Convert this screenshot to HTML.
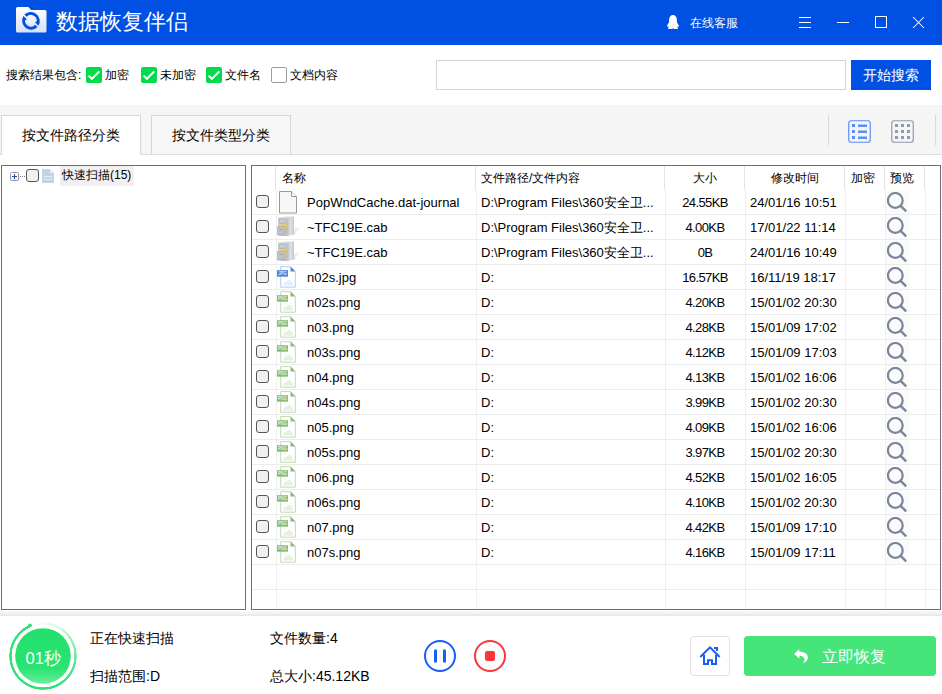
<!DOCTYPE html>
<html><head><meta charset="utf-8"><style>
*{box-sizing:border-box}
html,body{margin:0;padding:0;width:942px;height:694px;overflow:hidden;background:#fff;font-family:"Liberation Sans",sans-serif;color:#000}
.a{position:absolute}
#title{position:absolute;left:0;top:0;width:942px;height:45px;background:#0050e4}
#title .t{position:absolute;left:56px;top:6.8px;font-size:21.7px;color:#fff;line-height:30px;letter-spacing:0px}
.srch{position:absolute;top:45px;left:0;width:942px;height:60px;background:#fff}
.lbl{position:absolute;font-size:12px;line-height:16px;top:67px;color:#000}
.gcb{position:absolute;top:67px;width:16px;height:16px;border-radius:2px;background:#00dc4a}
.gcb svg{position:absolute;left:0;top:0}
.ucb{position:absolute;top:67px;width:16px;height:16px;border-radius:2px;border:1px solid #9c9c9c;background:#fff}
#band{position:absolute;left:0;top:105px;width:942px;height:50px;background:#f5f5f5;border-bottom:1px solid #dcdcdc}
.tab{position:absolute;top:115px;height:40px;border:1px solid #d6d6d6;border-bottom:none;font-size:14px;line-height:38px;text-align:center;color:#000}
#lp{position:absolute;left:1px;top:165px;width:245px;height:445px;border:1px solid #6f6f6f;background:#fff}
#rp{position:absolute;left:251px;top:165px;width:690px;height:445px;border:1px solid #6f6f6f;background:#fff;overflow:hidden}
.hd{position:absolute;top:0;height:24px;font-size:12px;line-height:24px;color:#000}
.vl{position:absolute;width:1px;background:#efefef}
.hv{background:#e3e3e3}
.hl{position:absolute;height:1px;left:0;width:688px;background:#ececec}
.row{position:absolute;left:0;width:688px;height:25px;font-size:13px;line-height:25px;color:#000}
.row .cb{position:absolute;left:4px;top:6px;width:13px;height:13px;border:1.5px solid #555;border-radius:3px;background:#f0f0f0}
.row .icw{position:absolute;left:25px;top:1px}
.row .ic{display:block}
.row .nm{position:absolute;left:55px;top:1px}
.row .pt{position:absolute;left:229px;top:1px}
.row .sz{position:absolute;left:413px;width:80px;text-align:center;top:1px;letter-spacing:-0.6px}
.row .dt{position:absolute;left:498px;top:1px}
.row .mbg{position:absolute;left:634px;top:1px;width:23px;height:24px;background:#fbfbfb}
.row .mag{position:absolute;left:635px;top:3px}
#bot{position:absolute;left:0;top:611px;width:942px;height:83px;background:#fff}
#shadow{position:absolute;left:0;top:611px;width:942px;height:5px;background:linear-gradient(#fbfbfb,#f2f2f2 50%,#e6e6e6)}
.bt{position:absolute;font-size:14px;line-height:16px;color:#000}
</style></head><body>
<div id="title">
  <svg class="a" style="left:16px;top:7px" width="31" height="26" viewBox="0 0 31 26">
    <defs><linearGradient id="fg" x1="0" y1="0" x2="0" y2="1"><stop offset="0" stop-color="#ffffff"/><stop offset="1" stop-color="#d6e2fb"/></linearGradient></defs>
    <path d="M1.5 0h11l2.5 3h14a1.5 1.5 0 0 1 1.5 1.5v19.5a1.5 1.5 0 0 1-1.5 1.5h-27.5a1.5 1.5 0 0 1-1.5-1.5v-22.5a1.5 1.5 0 0 1 1.5-1.5z" fill="url(#fg)"/>
    <g fill="#0050e4"><path d="M8.42 7.61A9 9 0 0 1 22.45 18.7L19 15.25L20.78 14.31A5.85 5.85 0 0 0 10.65 9.84Z"/><path d="M21.48 19.99A9 9 0 0 1 7.45 8.9L10.9 12.35L9.12 13.29A5.85 5.85 0 0 0 19.25 17.76Z"/></g>
  </svg>
  <div class="t">数据恢复伴侣</div>
  <svg class="a" style="left:667px;top:15px" width="12" height="14" viewBox="0 0 12 14"><path d="M6 0C8.3 0 9.6 1.7 9.8 4L10 7.5C10.8 8.5 11.6 9.8 12 11.5C11.6 11.9 11 11.6 10.5 11.2L10.5 12.5C11 12.8 11.2 13.3 10.8 13.7C10 14.1 8 14.1 6.8 13.8L6 13.4L5.2 13.8C4 14.1 2 14.1 1.2 13.7C0.8 13.3 1 12.8 1.5 12.5L1.5 11.2C1 11.6 0.4 11.9 0 11.5C0.4 9.8 1.2 8.5 2 7.5L2.2 4C2.4 1.7 3.7 0 6 0Z" fill="#fff"/></svg>
  <div class="a" style="left:690px;top:15px;font-size:12px;line-height:16px;color:#fff">在线客服</div>
  <div class="a" style="left:799px;top:17px;width:12px;height:1px;background:#fff"></div>
  <div class="a" style="left:799px;top:22px;width:12px;height:1px;background:#fff"></div>
  <div class="a" style="left:799px;top:27px;width:12px;height:1px;background:#fff"></div>
  <div class="a" style="left:837px;top:22px;width:12px;height:1px;background:#fff"></div>
  <div class="a" style="left:875px;top:16px;width:12px;height:12px;border:1px solid #fff"></div>
  <svg class="a" style="left:912px;top:16px" width="14" height="14" viewBox="0 0 14 14"><path d="M1 1L12 12M12 1L1 12" stroke="#fff" stroke-width="1.05"/></svg>
</div>

<div class="lbl" style="left:6px">搜索结果包含:</div>
<div class="gcb" style="left:86px"><svg width="16" height="16" viewBox="0 0 16 16"><path d="M2.6 8.6L5.9 11.8L13.3 4.4" fill="none" stroke="#fff" stroke-width="2"/></svg></div>
<div class="lbl" style="left:105px">加密</div>
<div class="gcb" style="left:141px"><svg width="16" height="16" viewBox="0 0 16 16"><path d="M2.6 8.6L5.9 11.8L13.3 4.4" fill="none" stroke="#fff" stroke-width="2"/></svg></div>
<div class="lbl" style="left:160px">未加密</div>
<div class="gcb" style="left:206px"><svg width="16" height="16" viewBox="0 0 16 16"><path d="M2.6 8.6L5.9 11.8L13.3 4.4" fill="none" stroke="#fff" stroke-width="2"/></svg></div>
<div class="lbl" style="left:225px">文件名</div>
<div class="ucb" style="left:271px"></div>
<div class="lbl" style="left:290px">文档内容</div>
<div class="a" style="left:436px;top:60px;width:410px;height:30px;border:1px solid #d4d4d4;background:#fff"></div>
<div class="a" style="left:851px;top:60px;width:80px;height:30px;background:#0050e4;color:#fff;font-size:14px;line-height:30px;text-align:center">开始搜索</div>

<div id="band"></div>
<div class="tab" style="left:1px;width:140px;background:#fff;height:40px">按文件路径分类</div>
<div class="tab" style="left:151px;width:140px;background:#f7f7f7;height:39px">按文件类型分类</div>
<div class="a" style="left:828px;top:115px;width:1px;height:30px;background:#d8d8d8"></div>
<div class="a" style="left:935px;top:115px;width:1px;height:30px;background:#d8d8d8"></div>
<svg class="a" style="left:848px;top:120px" width="23" height="23" viewBox="0 0 23 23"><rect x="0.75" y="0.75" width="21.5" height="21.5" rx="2.5" fill="none" stroke="#5b8ff9" stroke-width="1.2"/><g fill="#5b8ff9"><rect x="4" y="4" width="3" height="3"/><rect x="4" y="10" width="3" height="3"/><rect x="4" y="16" width="3" height="3"/><rect x="10" y="4.5" width="9" height="2.5"/><rect x="10" y="10.5" width="9" height="2.5"/><rect x="10" y="16.5" width="9" height="2.5"/></g></svg>
<svg class="a" style="left:891px;top:120px" width="23" height="23" viewBox="0 0 23 23"><rect x="0.75" y="0.75" width="21.5" height="21.5" rx="2.5" fill="none" stroke="#8e9ab4" stroke-width="1.2"/><g fill="#8e9ab4"><rect x="4" y="4" width="3" height="3"/><rect x="10" y="4" width="3" height="3"/><rect x="16" y="4" width="3" height="3"/><rect x="4" y="10" width="3" height="3"/><rect x="10" y="10" width="3" height="3"/><rect x="16" y="10" width="3" height="3"/><rect x="4" y="16" width="3" height="3"/><rect x="10" y="16" width="3" height="3"/><rect x="16" y="16" width="3" height="3"/></g></svg>

<div id="lp">
  <div class="a" style="left:8px;top:6px;width:9px;height:9px;border:1px solid #9a9a9a;border-radius:1.5px;background:linear-gradient(#fff,#ececec)"></div>
  <div class="a" style="left:10px;top:10px;width:5px;height:1px;background:#2a4aa0"></div>
  <div class="a" style="left:12px;top:8px;width:1px;height:5px;background:#2a4aa0"></div>
  <div class="a" style="left:18px;top:10px;width:1px;height:1px;background:#777"></div><div class="a" style="left:20px;top:10px;width:1px;height:1px;background:#777"></div><div class="a" style="left:22px;top:10px;width:1px;height:1px;background:#777"></div>
  <div class="a" style="left:24px;top:3px;width:13px;height:13px;border:1.5px solid #555;border-radius:3px;background:#f0f0f0"></div>
  <svg class="a" style="left:40px;top:3px" width="12" height="14" viewBox="0 0 12 14"><path d="M0 0h8l4 4v10H0z" fill="#c5d2e3"/><path d="M8 0v4h4z" fill="#e8eef6"/><rect x="2" y="7" width="8" height="1" fill="#e9eef5"/><rect x="2" y="10" width="8" height="1" fill="#e9eef5"/></svg>
  <div class="a" style="left:58px;top:0px;width:74px;height:20px;background:#f0f0f0;font-size:12px;line-height:19.5px;padding-left:2px;color:#000">快速扫描(15)</div>
</div>

<div id="rp">
  <div class="hd" style="left:29.5px">名称</div>
  <div class="hd" style="left:229px">文件路径/文件内容</div>
  <div class="hd" style="left:441px">大小</div>
  <div class="hd" style="left:519px">修改时间</div>
  <div class="hd" style="left:599px">加密</div>
  <div class="hd" style="left:637.5px">预览</div>
  <div class="vl hv" style="left:23px;top:0;height:24px"></div>
  <div class="vl hv" style="left:223px;top:0;height:24px"></div>
  <div class="vl hv" style="left:412px;top:0;height:24px"></div>
  <div class="vl hv" style="left:492px;top:0;height:24px"></div>
  <div class="vl hv" style="left:592px;top:0;height:24px"></div>
  <div class="vl hv" style="left:632px;top:0;height:24px"></div>
  <div class="vl hv" style="left:672px;top:0;height:24px"></div>
  <div class="vl" style="left:24px;top:24px;height:420px"></div>
  <div class="vl" style="left:224px;top:24px;height:420px"></div>
  <div class="vl" style="left:413px;top:24px;height:420px"></div>
  <div class="vl" style="left:493px;top:24px;height:420px"></div>
  <div class="vl" style="left:593px;top:24px;height:420px"></div>
  <div class="vl" style="left:633px;top:24px;height:420px"></div>
  <div class="vl" style="left:673px;top:24px;height:420px"></div>
  <div class="hl" style="top:48px"></div>
<div class="hl" style="top:73px"></div>
<div class="hl" style="top:98px"></div>
<div class="hl" style="top:123px"></div>
<div class="hl" style="top:148px"></div>
<div class="hl" style="top:173px"></div>
<div class="hl" style="top:198px"></div>
<div class="hl" style="top:223px"></div>
<div class="hl" style="top:248px"></div>
<div class="hl" style="top:273px"></div>
<div class="hl" style="top:298px"></div>
<div class="hl" style="top:323px"></div>
<div class="hl" style="top:348px"></div>
<div class="hl" style="top:373px"></div>
<div class="hl" style="top:398px"></div>
<div class="hl" style="top:423px"></div>
  <div class="row" style="top:23px"><div class="cb"></div><div class="icw"><svg class="ic" width="22" height="24" viewBox="0 0 22 24"><path d="M2.5 1.5h12l5 5v16.5h-17z" fill="#f7f7f7" stroke="#9a9a9a"/><path d="M14.5 1.5v5h5" fill="#fff" stroke="#9a9a9a"/></svg></div><div class="nm">PopWndCache.dat-journal</div><div class="pt">D:\Program Files\360安全卫...</div><div class="sz">24.55KB</div><div class="dt">24/01/16 10:51</div><div class="mbg"></div><svg class="mag" width="22" height="22" viewBox="0 0 22 22"><circle cx="8.3" cy="8.4" r="7.4" fill="none" stroke="#7a859b" stroke-width="2.2"/><path d="M13.6 13.8l5.6 5.6" stroke="#7a859b" stroke-width="2.4" stroke-linecap="butt"/></svg></div>
<div class="row" style="top:48px"><div class="cb"></div><div class="icw"><svg class="ic" width="22" height="24" viewBox="0 0 22 24"><defs><linearGradient id="cs" x1="0" x2="1"><stop offset="0" stop-color="#aeb6bb"/><stop offset="0.5" stop-color="#dde1e4"/><stop offset="1" stop-color="#c3c9cd"/></linearGradient><linearGradient id="cf" x1="0" y1="0" x2="0" y2="1"><stop offset="0" stop-color="#c9cfd4"/><stop offset="1" stop-color="#b9c0c6"/></linearGradient></defs><path d="M17 14l4.8-1.5v1L17 21z" fill="#ececec"/><path d="M9.7 2.3L17 1.6V19.6L9.7 21.2z" fill="url(#cs)"/><path d="M1.3 2.6L9.7 2.3V21.2L1.3 20.4z" fill="url(#cf)"/><path d="M1.3 2.6L9.7 2.3L17 1.6L9 1.3z" fill="#e4e8ea"/><path d="M2.2 4h6.6v4.5H2.2z" fill="none" stroke="#a9b0b6" stroke-width="0.7"/><path d="M1.5 9.2h7.8l-0.3 7H1.5z" fill="#efcf5a"/><path d="M8.6 9.3h0.9v8h-0.9z" fill="#e2b93c"/><path d="M0.3 11.6h7.7v8.1H0.3z" fill="#bcc3c9" stroke="#9ea6ac" stroke-width="0.6"/><path d="M2.3 14.5h3.5" stroke="#8e969c" stroke-width="0.7"/></svg></div><div class="nm">~TFC19E.cab</div><div class="pt">D:\Program Files\360安全卫...</div><div class="sz">4.00KB</div><div class="dt">17/01/22 11:14</div><div class="mbg"></div><svg class="mag" width="22" height="22" viewBox="0 0 22 22"><circle cx="8.3" cy="8.4" r="7.4" fill="none" stroke="#7a859b" stroke-width="2.2"/><path d="M13.6 13.8l5.6 5.6" stroke="#7a859b" stroke-width="2.4" stroke-linecap="butt"/></svg></div>
<div class="row" style="top:73px"><div class="cb"></div><div class="icw"><svg class="ic" width="22" height="24" viewBox="0 0 22 24"><defs><linearGradient id="cs" x1="0" x2="1"><stop offset="0" stop-color="#aeb6bb"/><stop offset="0.5" stop-color="#dde1e4"/><stop offset="1" stop-color="#c3c9cd"/></linearGradient><linearGradient id="cf" x1="0" y1="0" x2="0" y2="1"><stop offset="0" stop-color="#c9cfd4"/><stop offset="1" stop-color="#b9c0c6"/></linearGradient></defs><path d="M17 14l4.8-1.5v1L17 21z" fill="#ececec"/><path d="M9.7 2.3L17 1.6V19.6L9.7 21.2z" fill="url(#cs)"/><path d="M1.3 2.6L9.7 2.3V21.2L1.3 20.4z" fill="url(#cf)"/><path d="M1.3 2.6L9.7 2.3L17 1.6L9 1.3z" fill="#e4e8ea"/><path d="M2.2 4h6.6v4.5H2.2z" fill="none" stroke="#a9b0b6" stroke-width="0.7"/><path d="M1.5 9.2h7.8l-0.3 7H1.5z" fill="#efcf5a"/><path d="M8.6 9.3h0.9v8h-0.9z" fill="#e2b93c"/><path d="M0.3 11.6h7.7v8.1H0.3z" fill="#bcc3c9" stroke="#9ea6ac" stroke-width="0.6"/><path d="M2.3 14.5h3.5" stroke="#8e969c" stroke-width="0.7"/></svg></div><div class="nm">~TFC19E.cab</div><div class="pt">D:\Program Files\360安全卫...</div><div class="sz">0B</div><div class="dt">24/01/16 10:49</div><div class="mbg"></div><svg class="mag" width="22" height="22" viewBox="0 0 22 22"><circle cx="8.3" cy="8.4" r="7.4" fill="none" stroke="#7a859b" stroke-width="2.2"/><path d="M13.6 13.8l5.6 5.6" stroke="#7a859b" stroke-width="2.4" stroke-linecap="butt"/></svg></div>
<div class="row" style="top:98px"><div class="cb"></div><div class="icw"><svg class="ic" width="22" height="24" viewBox="0 0 22 24"><path d="M3.7 1.6H13.5L18.3 6.4V22.2H3.7Z" fill="#fff" stroke="#b3cbf2"/><path d="M13.5 1.6L18.3 6.4H13.5Z" fill="#4f86e0"/><rect x="0" y="5.2" width="11" height="6.5" fill="#4f86e0"/><text x="1.2" y="10.2" font-size="4.6" fill="#fff" font-family="Liberation Sans" textLength="8.5" lengthAdjust="spacingAndGlyphs">JPG</text><path d="M5.8 20.6C6.5 18 8 16.5 9.5 16.5C10.5 14.3 13.5 14.3 14.5 16.8C15.5 17.5 16.2 19 16.2 20.6Z" fill="#e3edfb"/><circle cx="8.4" cy="13.6" r="0.8" fill="#e3edfb"/></svg></div><div class="nm">n02s.jpg</div><div class="pt">D:</div><div class="sz">16.57KB</div><div class="dt">16/11/19 18:17</div><div class="mbg"></div><svg class="mag" width="22" height="22" viewBox="0 0 22 22"><circle cx="8.3" cy="8.4" r="7.4" fill="none" stroke="#7a859b" stroke-width="2.2"/><path d="M13.6 13.8l5.6 5.6" stroke="#7a859b" stroke-width="2.4" stroke-linecap="butt"/></svg></div>
<div class="row" style="top:123px"><div class="cb"></div><div class="icw"><svg class="ic" width="22" height="24" viewBox="0 0 22 24"><path d="M3.7 1.6H13.5L18.3 6.4V22.2H3.7Z" fill="#fff" stroke="#c0dab3"/><path d="M13.5 1.6L18.3 6.4H13.5Z" fill="#89bb74"/><rect x="0" y="5.2" width="11" height="6.5" fill="#89bb74"/><text x="1" y="10.2" font-size="4.6" fill="#fff" font-family="Liberation Sans" textLength="9" lengthAdjust="spacingAndGlyphs">PNG</text><path d="M5.8 20.6C6.5 18 8 16.5 9.5 16.5C10.5 14.3 13.5 14.3 14.5 16.8C15.5 17.5 16.2 19 16.2 20.6Z" fill="#e6f1e1"/><circle cx="8.4" cy="13.6" r="0.8" fill="#e6f1e1"/></svg></div><div class="nm">n02s.png</div><div class="pt">D:</div><div class="sz">4.20KB</div><div class="dt">15/01/02 20:30</div><div class="mbg"></div><svg class="mag" width="22" height="22" viewBox="0 0 22 22"><circle cx="8.3" cy="8.4" r="7.4" fill="none" stroke="#7a859b" stroke-width="2.2"/><path d="M13.6 13.8l5.6 5.6" stroke="#7a859b" stroke-width="2.4" stroke-linecap="butt"/></svg></div>
<div class="row" style="top:148px"><div class="cb"></div><div class="icw"><svg class="ic" width="22" height="24" viewBox="0 0 22 24"><path d="M3.7 1.6H13.5L18.3 6.4V22.2H3.7Z" fill="#fff" stroke="#c0dab3"/><path d="M13.5 1.6L18.3 6.4H13.5Z" fill="#89bb74"/><rect x="0" y="5.2" width="11" height="6.5" fill="#89bb74"/><text x="1" y="10.2" font-size="4.6" fill="#fff" font-family="Liberation Sans" textLength="9" lengthAdjust="spacingAndGlyphs">PNG</text><path d="M5.8 20.6C6.5 18 8 16.5 9.5 16.5C10.5 14.3 13.5 14.3 14.5 16.8C15.5 17.5 16.2 19 16.2 20.6Z" fill="#e6f1e1"/><circle cx="8.4" cy="13.6" r="0.8" fill="#e6f1e1"/></svg></div><div class="nm">n03.png</div><div class="pt">D:</div><div class="sz">4.28KB</div><div class="dt">15/01/09 17:02</div><div class="mbg"></div><svg class="mag" width="22" height="22" viewBox="0 0 22 22"><circle cx="8.3" cy="8.4" r="7.4" fill="none" stroke="#7a859b" stroke-width="2.2"/><path d="M13.6 13.8l5.6 5.6" stroke="#7a859b" stroke-width="2.4" stroke-linecap="butt"/></svg></div>
<div class="row" style="top:173px"><div class="cb"></div><div class="icw"><svg class="ic" width="22" height="24" viewBox="0 0 22 24"><path d="M3.7 1.6H13.5L18.3 6.4V22.2H3.7Z" fill="#fff" stroke="#c0dab3"/><path d="M13.5 1.6L18.3 6.4H13.5Z" fill="#89bb74"/><rect x="0" y="5.2" width="11" height="6.5" fill="#89bb74"/><text x="1" y="10.2" font-size="4.6" fill="#fff" font-family="Liberation Sans" textLength="9" lengthAdjust="spacingAndGlyphs">PNG</text><path d="M5.8 20.6C6.5 18 8 16.5 9.5 16.5C10.5 14.3 13.5 14.3 14.5 16.8C15.5 17.5 16.2 19 16.2 20.6Z" fill="#e6f1e1"/><circle cx="8.4" cy="13.6" r="0.8" fill="#e6f1e1"/></svg></div><div class="nm">n03s.png</div><div class="pt">D:</div><div class="sz">4.12KB</div><div class="dt">15/01/09 17:03</div><div class="mbg"></div><svg class="mag" width="22" height="22" viewBox="0 0 22 22"><circle cx="8.3" cy="8.4" r="7.4" fill="none" stroke="#7a859b" stroke-width="2.2"/><path d="M13.6 13.8l5.6 5.6" stroke="#7a859b" stroke-width="2.4" stroke-linecap="butt"/></svg></div>
<div class="row" style="top:198px"><div class="cb"></div><div class="icw"><svg class="ic" width="22" height="24" viewBox="0 0 22 24"><path d="M3.7 1.6H13.5L18.3 6.4V22.2H3.7Z" fill="#fff" stroke="#c0dab3"/><path d="M13.5 1.6L18.3 6.4H13.5Z" fill="#89bb74"/><rect x="0" y="5.2" width="11" height="6.5" fill="#89bb74"/><text x="1" y="10.2" font-size="4.6" fill="#fff" font-family="Liberation Sans" textLength="9" lengthAdjust="spacingAndGlyphs">PNG</text><path d="M5.8 20.6C6.5 18 8 16.5 9.5 16.5C10.5 14.3 13.5 14.3 14.5 16.8C15.5 17.5 16.2 19 16.2 20.6Z" fill="#e6f1e1"/><circle cx="8.4" cy="13.6" r="0.8" fill="#e6f1e1"/></svg></div><div class="nm">n04.png</div><div class="pt">D:</div><div class="sz">4.13KB</div><div class="dt">15/01/02 16:06</div><div class="mbg"></div><svg class="mag" width="22" height="22" viewBox="0 0 22 22"><circle cx="8.3" cy="8.4" r="7.4" fill="none" stroke="#7a859b" stroke-width="2.2"/><path d="M13.6 13.8l5.6 5.6" stroke="#7a859b" stroke-width="2.4" stroke-linecap="butt"/></svg></div>
<div class="row" style="top:223px"><div class="cb"></div><div class="icw"><svg class="ic" width="22" height="24" viewBox="0 0 22 24"><path d="M3.7 1.6H13.5L18.3 6.4V22.2H3.7Z" fill="#fff" stroke="#c0dab3"/><path d="M13.5 1.6L18.3 6.4H13.5Z" fill="#89bb74"/><rect x="0" y="5.2" width="11" height="6.5" fill="#89bb74"/><text x="1" y="10.2" font-size="4.6" fill="#fff" font-family="Liberation Sans" textLength="9" lengthAdjust="spacingAndGlyphs">PNG</text><path d="M5.8 20.6C6.5 18 8 16.5 9.5 16.5C10.5 14.3 13.5 14.3 14.5 16.8C15.5 17.5 16.2 19 16.2 20.6Z" fill="#e6f1e1"/><circle cx="8.4" cy="13.6" r="0.8" fill="#e6f1e1"/></svg></div><div class="nm">n04s.png</div><div class="pt">D:</div><div class="sz">3.99KB</div><div class="dt">15/01/02 20:30</div><div class="mbg"></div><svg class="mag" width="22" height="22" viewBox="0 0 22 22"><circle cx="8.3" cy="8.4" r="7.4" fill="none" stroke="#7a859b" stroke-width="2.2"/><path d="M13.6 13.8l5.6 5.6" stroke="#7a859b" stroke-width="2.4" stroke-linecap="butt"/></svg></div>
<div class="row" style="top:248px"><div class="cb"></div><div class="icw"><svg class="ic" width="22" height="24" viewBox="0 0 22 24"><path d="M3.7 1.6H13.5L18.3 6.4V22.2H3.7Z" fill="#fff" stroke="#c0dab3"/><path d="M13.5 1.6L18.3 6.4H13.5Z" fill="#89bb74"/><rect x="0" y="5.2" width="11" height="6.5" fill="#89bb74"/><text x="1" y="10.2" font-size="4.6" fill="#fff" font-family="Liberation Sans" textLength="9" lengthAdjust="spacingAndGlyphs">PNG</text><path d="M5.8 20.6C6.5 18 8 16.5 9.5 16.5C10.5 14.3 13.5 14.3 14.5 16.8C15.5 17.5 16.2 19 16.2 20.6Z" fill="#e6f1e1"/><circle cx="8.4" cy="13.6" r="0.8" fill="#e6f1e1"/></svg></div><div class="nm">n05.png</div><div class="pt">D:</div><div class="sz">4.09KB</div><div class="dt">15/01/02 16:06</div><div class="mbg"></div><svg class="mag" width="22" height="22" viewBox="0 0 22 22"><circle cx="8.3" cy="8.4" r="7.4" fill="none" stroke="#7a859b" stroke-width="2.2"/><path d="M13.6 13.8l5.6 5.6" stroke="#7a859b" stroke-width="2.4" stroke-linecap="butt"/></svg></div>
<div class="row" style="top:273px"><div class="cb"></div><div class="icw"><svg class="ic" width="22" height="24" viewBox="0 0 22 24"><path d="M3.7 1.6H13.5L18.3 6.4V22.2H3.7Z" fill="#fff" stroke="#c0dab3"/><path d="M13.5 1.6L18.3 6.4H13.5Z" fill="#89bb74"/><rect x="0" y="5.2" width="11" height="6.5" fill="#89bb74"/><text x="1" y="10.2" font-size="4.6" fill="#fff" font-family="Liberation Sans" textLength="9" lengthAdjust="spacingAndGlyphs">PNG</text><path d="M5.8 20.6C6.5 18 8 16.5 9.5 16.5C10.5 14.3 13.5 14.3 14.5 16.8C15.5 17.5 16.2 19 16.2 20.6Z" fill="#e6f1e1"/><circle cx="8.4" cy="13.6" r="0.8" fill="#e6f1e1"/></svg></div><div class="nm">n05s.png</div><div class="pt">D:</div><div class="sz">3.97KB</div><div class="dt">15/01/02 20:30</div><div class="mbg"></div><svg class="mag" width="22" height="22" viewBox="0 0 22 22"><circle cx="8.3" cy="8.4" r="7.4" fill="none" stroke="#7a859b" stroke-width="2.2"/><path d="M13.6 13.8l5.6 5.6" stroke="#7a859b" stroke-width="2.4" stroke-linecap="butt"/></svg></div>
<div class="row" style="top:298px"><div class="cb"></div><div class="icw"><svg class="ic" width="22" height="24" viewBox="0 0 22 24"><path d="M3.7 1.6H13.5L18.3 6.4V22.2H3.7Z" fill="#fff" stroke="#c0dab3"/><path d="M13.5 1.6L18.3 6.4H13.5Z" fill="#89bb74"/><rect x="0" y="5.2" width="11" height="6.5" fill="#89bb74"/><text x="1" y="10.2" font-size="4.6" fill="#fff" font-family="Liberation Sans" textLength="9" lengthAdjust="spacingAndGlyphs">PNG</text><path d="M5.8 20.6C6.5 18 8 16.5 9.5 16.5C10.5 14.3 13.5 14.3 14.5 16.8C15.5 17.5 16.2 19 16.2 20.6Z" fill="#e6f1e1"/><circle cx="8.4" cy="13.6" r="0.8" fill="#e6f1e1"/></svg></div><div class="nm">n06.png</div><div class="pt">D:</div><div class="sz">4.52KB</div><div class="dt">15/01/02 16:05</div><div class="mbg"></div><svg class="mag" width="22" height="22" viewBox="0 0 22 22"><circle cx="8.3" cy="8.4" r="7.4" fill="none" stroke="#7a859b" stroke-width="2.2"/><path d="M13.6 13.8l5.6 5.6" stroke="#7a859b" stroke-width="2.4" stroke-linecap="butt"/></svg></div>
<div class="row" style="top:323px"><div class="cb"></div><div class="icw"><svg class="ic" width="22" height="24" viewBox="0 0 22 24"><path d="M3.7 1.6H13.5L18.3 6.4V22.2H3.7Z" fill="#fff" stroke="#c0dab3"/><path d="M13.5 1.6L18.3 6.4H13.5Z" fill="#89bb74"/><rect x="0" y="5.2" width="11" height="6.5" fill="#89bb74"/><text x="1" y="10.2" font-size="4.6" fill="#fff" font-family="Liberation Sans" textLength="9" lengthAdjust="spacingAndGlyphs">PNG</text><path d="M5.8 20.6C6.5 18 8 16.5 9.5 16.5C10.5 14.3 13.5 14.3 14.5 16.8C15.5 17.5 16.2 19 16.2 20.6Z" fill="#e6f1e1"/><circle cx="8.4" cy="13.6" r="0.8" fill="#e6f1e1"/></svg></div><div class="nm">n06s.png</div><div class="pt">D:</div><div class="sz">4.10KB</div><div class="dt">15/01/02 20:30</div><div class="mbg"></div><svg class="mag" width="22" height="22" viewBox="0 0 22 22"><circle cx="8.3" cy="8.4" r="7.4" fill="none" stroke="#7a859b" stroke-width="2.2"/><path d="M13.6 13.8l5.6 5.6" stroke="#7a859b" stroke-width="2.4" stroke-linecap="butt"/></svg></div>
<div class="row" style="top:348px"><div class="cb"></div><div class="icw"><svg class="ic" width="22" height="24" viewBox="0 0 22 24"><path d="M3.7 1.6H13.5L18.3 6.4V22.2H3.7Z" fill="#fff" stroke="#c0dab3"/><path d="M13.5 1.6L18.3 6.4H13.5Z" fill="#89bb74"/><rect x="0" y="5.2" width="11" height="6.5" fill="#89bb74"/><text x="1" y="10.2" font-size="4.6" fill="#fff" font-family="Liberation Sans" textLength="9" lengthAdjust="spacingAndGlyphs">PNG</text><path d="M5.8 20.6C6.5 18 8 16.5 9.5 16.5C10.5 14.3 13.5 14.3 14.5 16.8C15.5 17.5 16.2 19 16.2 20.6Z" fill="#e6f1e1"/><circle cx="8.4" cy="13.6" r="0.8" fill="#e6f1e1"/></svg></div><div class="nm">n07.png</div><div class="pt">D:</div><div class="sz">4.42KB</div><div class="dt">15/01/09 17:10</div><div class="mbg"></div><svg class="mag" width="22" height="22" viewBox="0 0 22 22"><circle cx="8.3" cy="8.4" r="7.4" fill="none" stroke="#7a859b" stroke-width="2.2"/><path d="M13.6 13.8l5.6 5.6" stroke="#7a859b" stroke-width="2.4" stroke-linecap="butt"/></svg></div>
<div class="row" style="top:373px"><div class="cb"></div><div class="icw"><svg class="ic" width="22" height="24" viewBox="0 0 22 24"><path d="M3.7 1.6H13.5L18.3 6.4V22.2H3.7Z" fill="#fff" stroke="#c0dab3"/><path d="M13.5 1.6L18.3 6.4H13.5Z" fill="#89bb74"/><rect x="0" y="5.2" width="11" height="6.5" fill="#89bb74"/><text x="1" y="10.2" font-size="4.6" fill="#fff" font-family="Liberation Sans" textLength="9" lengthAdjust="spacingAndGlyphs">PNG</text><path d="M5.8 20.6C6.5 18 8 16.5 9.5 16.5C10.5 14.3 13.5 14.3 14.5 16.8C15.5 17.5 16.2 19 16.2 20.6Z" fill="#e6f1e1"/><circle cx="8.4" cy="13.6" r="0.8" fill="#e6f1e1"/></svg></div><div class="nm">n07s.png</div><div class="pt">D:</div><div class="sz">4.16KB</div><div class="dt">15/01/09 17:11</div><div class="mbg"></div><svg class="mag" width="22" height="22" viewBox="0 0 22 22"><circle cx="8.3" cy="8.4" r="7.4" fill="none" stroke="#7a859b" stroke-width="2.2"/><path d="M13.6 13.8l5.6 5.6" stroke="#7a859b" stroke-width="2.4" stroke-linecap="butt"/></svg></div>
</div>

<div id="bot"></div>
<div id="shadow"></div>
<svg class="a" style="left:7px;top:620px" width="72" height="72" viewBox="0 0 72 72">
  <defs><linearGradient id="ig" x1="0" y1="0" x2="0" y2="1"><stop offset="0" stop-color="#22e06b"/><stop offset="0.72" stop-color="#2ae371"/><stop offset="1" stop-color="#68ef9c"/></linearGradient>
  <linearGradient id="rg" x1="0" y1="0" x2="1" y2="0"><stop offset="0" stop-color="#2fe078"/><stop offset="1" stop-color="#c9f7dc"/></linearGradient></defs>
  <circle cx="36" cy="36" r="27.8" fill="url(#ig)"/>
  <circle cx="23" cy="5.3" r="1.9" fill="#2fe078"/>
</svg>
<div class="a" style="left:9px;top:622px;width:68px;height:68px;border-radius:50%;background:conic-gradient(from 336deg,rgba(46,224,120,0.02) 0deg,rgba(46,224,120,0.06) 24deg,rgba(46,224,120,0.22) 54deg,rgba(46,224,120,0.48) 84deg,rgba(46,224,120,0.7) 114deg,rgba(46,224,120,0.88) 144deg,#2ee078 180deg,#2ee078 360deg);-webkit-mask:radial-gradient(circle at center,transparent 31.1px,#000 31.6px,#000 33.7px,transparent 34.2px)"></div>
<div class="a" style="left:25.5px;top:648px;font-size:16.5px;line-height:20px;color:#fff">01秒</div>
<div class="bt" style="left:90px;top:630px">正在快速扫描</div>
<div class="bt" style="left:90px;top:668px">扫描范围:D</div>
<div class="bt" style="left:270px;top:630px">文件数量:4</div>
<div class="bt" style="left:270px;top:668px">总大小:45.12KB</div>
<svg class="a" style="left:423px;top:639px" width="34" height="34" viewBox="0 0 34 34"><circle cx="17" cy="17" r="15" fill="none" stroke="#1a5cf6" stroke-width="2"/><path d="M12.5 11.8v10.4M21.5 11.8v10.4" stroke="#1a5cf6" stroke-width="3" stroke-linecap="round"/></svg>
<svg class="a" style="left:473px;top:639px" width="34" height="34" viewBox="0 0 34 34"><circle cx="17" cy="17" r="15" fill="none" stroke="#fb3636" stroke-width="2"/><rect x="12" y="12" width="10" height="10" rx="2" fill="#fb3636"/></svg>
<div class="a" style="left:690px;top:636px;width:40px;height:40px;border:1px solid #e2e2e2;border-radius:4px;background:#fff"></div>
<svg class="a" style="left:699px;top:646px" width="22" height="20" viewBox="0 0 22 20"><path d="M1.3 11L11 1.4L20.7 11" fill="none" stroke="#1a5cf6" stroke-width="2"/><path d="M5 8.8V18H9V14.2H13V18H17V8.8" fill="none" stroke="#1a5cf6" stroke-width="2"/><path d="M15 1h4v4h-2v-2h-2z" fill="#1a5cf6"/></svg>
<div class="a" style="left:744px;top:636px;width:192px;height:40px;border-radius:4px;background:#45e57a"></div>
<svg class="a" style="left:793px;top:648px" width="16" height="16" viewBox="0 0 16 16"><path d="M1 6L6.2 1.2V3.6C11.5 3.6 15.5 6.5 14.8 10.5C14.4 12.8 12 14.5 9.5 15.5C11.5 13.5 12.2 11.5 11 9.8C10 8.3 8.5 7.8 6.4 7.8V10.5Z" fill="#fff"/></svg>
<div class="a" style="left:822px;top:646.5px;font-size:16px;line-height:20px;color:#fff">立即恢复</div>
</body></html>
